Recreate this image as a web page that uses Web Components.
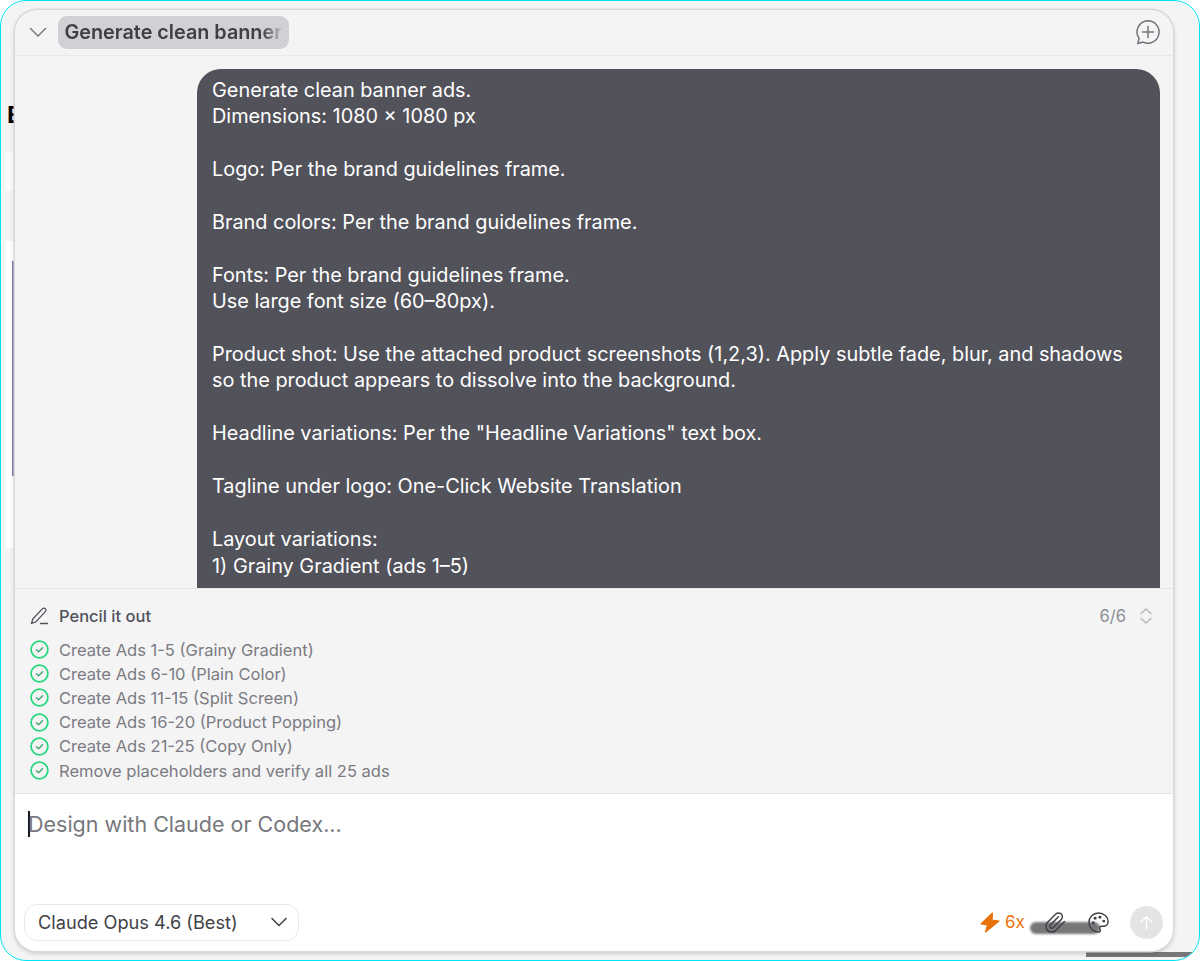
<!DOCTYPE html>
<html lang="en">
<head>
<meta charset="utf-8">
<title>Pencil chat</title>
<style>
html, body { margin: 0; padding: 0; background: #fff; }
body { font-family: Inter, "Liberation Sans", sans-serif; }
</style>
</head>
<body>
<app-frame>
	<chat-panel>
		<panel-header slot="header" title-text="Generate clean banner ads"></panel-header>
		<message-bubble slot="messages">Generate clean banner ads.
Dimensions: 1080 × 1080 px

Logo: Per the brand guidelines frame.

Brand colors: Per the brand guidelines frame.

Fonts: Per the brand guidelines frame.
Use large font size (60–80px).

Product shot: Use the attached product screenshots (1,2,3). Apply subtle fade, blur, and shadows so the product appears to dissolve into the background.

Headline variations: Per the "Headline Variations" text box.

Tagline under logo: One-Click Website Translation

Layout variations:
1) Grainy Gradient (ads 1–5)</message-bubble>
		<task-panel slot="tasks" heading="Pencil it out" count="6/6">
			<task-item>Create Ads 1-5 (Grainy Gradient)</task-item>
			<task-item>Create Ads 6-10 (Plain Color)</task-item>
			<task-item>Create Ads 11-15 (Split Screen)</task-item>
			<task-item>Create Ads 16-20 (Product Popping)</task-item>
			<task-item>Create Ads 21-25 (Copy Only)</task-item>
			<task-item>Remove placeholders and verify all 25 ads</task-item>
		</task-panel>
		<chat-composer slot="composer" placeholder="Design with Claude or Codex..." model="Claude Opus 4.6 (Best)"></chat-composer>
	</chat-panel>
</app-frame>

<script>
// marco exterior con el borde cian y los restos de la pagina de atras
class AppFrame extends HTMLElement {
	constructor() {
		super();
		this.attachShadow({ mode: 'open' });
	}
	connectedCallback() {
		this.shadowRoot.innerHTML = `
		<style>
		:host { display: block; width: 1200px; height: 961px; box-sizing: border-box; position: relative; overflow: hidden; background: #fff; }
		.frame { box-sizing: border-box; height: 961px; border: 1.5px solid #00e5f5; border-radius: 26px; background: #f4f4f5; padding: 8.5px 26px 9px 14px; position: relative; overflow: hidden; }
		.back { position: absolute; left: 4px; width: 9px; background: #fff; }
		.b1 { top: 151px; height: 38px; background: #fafafa; }
		.b2 { top: 240px; height: 307px; }
		.line { position: absolute; left: 11px; top: 260px; width: 2px; height: 215px; background: #7f80ac; }
		.glyph { position: absolute; left: 6px; top: 100px; font: 700 24px "Liberation Sans", sans-serif; color: #000; width: 7px; overflow: hidden; line-height: 28px; }
		.tail { position: absolute; right: 0; bottom: 3px; width: 113px; height: 5px; background: #77777a; }
		</style>
		<div class="frame">
			<div class="back b1"></div>
			<div class="back b2"></div>
			<div class="line"></div>
			<div class="glyph">E</div>
			<div class="tail"></div>
			<slot></slot>
		</div>
		`;
	}
}

// panel principal: cabecera, mensajes, tareas y caja de texto
class ChatPanel extends HTMLElement {
	constructor() {
		super();
		this.attachShadow({ mode: 'open' });
	}
	connectedCallback() {
		this.shadowRoot.innerHTML = `
		<style>
		:host { display: flex; flex-direction: column; height: 941px; box-sizing: border-box; border-radius: 22px; background: #f4f4f5; box-shadow: 0 0 0 1.5px #d9d9dc, 0 2px 5px rgba(0,0,0,.22); overflow: hidden; position: relative; }
		.messages { flex: 1; min-height: 0; overflow: hidden; display: flex; flex-direction: column; align-items: flex-end; padding: 12.5px 13px 0 0; }
		</style>
		<slot name="header"></slot>
		<div class="messages"><slot name="messages"></slot></div>
		<slot name="tasks"></slot>
		<slot name="composer"></slot>
		`;
	}
}

class PanelHeader extends HTMLElement {
	constructor() {
		super();
		this.attachShadow({ mode: 'open' });
	}
	connectedCallback() {
		const titulo = this.getAttribute('title-text');
		this.shadowRoot.innerHTML = `
		<style>
		:host { display: flex; flex: none; align-items: center; height: 46.5px; box-sizing: border-box; border-bottom: 1.5px solid #e8e8ea; padding: 0 12px 0 14px; }
		.chev { width: 18px; height: 18px; margin-right: 11px; flex: none; }
		.pill { width: 231px; height: 33px; box-sizing: border-box; background: #d0d0d5; border-radius: 9px; padding: 0 8px 0 6.5px; display: flex; align-items: center; overflow: hidden; }
		.pill span { font: 600 19.8px/33px Inter, "Liberation Sans", sans-serif; color: #3f3f46; white-space: nowrap; overflow: hidden; width: 100%; -webkit-mask-image: linear-gradient(to right, #000 91%, rgba(0,0,0,.15) 100%); mask-image: linear-gradient(to right, #000 91%, rgba(0,0,0,.15) 100%); }
		.add { margin-left: auto; width: 28px; height: 28px; flex: none; }
		</style>
		<svg class="chev" viewBox="0 0 18 18" fill="none" stroke="#71717a" stroke-width="1.4" stroke-linecap="round" stroke-linejoin="round"><path d="M1.500 5.500 9 13l7.500-7.500"/></svg>
		<div class="pill"><span>${titulo}</span></div>
		<svg class="add" viewBox="0 0 28 28" fill="none" stroke="#71717a" stroke-width="1.5" stroke-linecap="round" stroke-linejoin="round"><path d="M15 2.800a11.200 11.200 0 1 1-5 21.300l-5.200 1.300 1.300-5A11.200 11.200 0 0 1 15 2.800Z"/><path d="M15 8.500v11M9.500 14h11"/></svg>
		`;
	}
}

class MessageBubble extends HTMLElement {
	constructor() {
		super();
		this.attachShadow({ mode: 'open' });
	}
	connectedCallback() {
		// el slot va pegado al div: con pre-wrap cualquier espacio del template se veria
		this.shadowRoot.innerHTML = `
		<style>
		:host { display: block; flex: none; width: 963px; box-sizing: border-box; background: #52525b; border-radius: 24px; padding: 8px 15px 40px; color: #fff; font: 400 19.87px/26.45px Inter, "Liberation Sans", sans-serif; }
		.body { white-space: pre-wrap; }
		</style>
		<div class="body"><slot></slot></div>
		`;
	}
}

class TaskPanel extends HTMLElement {
	constructor() {
		super();
		this.attachShadow({ mode: 'open' });
	}
	connectedCallback() {
		this.shadowRoot.innerHTML = `
		<style>
		:host { display: block; flex: none; height: 206px; box-sizing: border-box; border-top: 1.5px solid #e6e6e8; border-bottom: 1.5px solid #e6e6e8; padding: 15px 19px 0 15px; background: #f4f4f5; }
		.head { display: flex; align-items: center; height: 24px; margin-bottom: 10px; font: 500 16.5px/24px Inter, "Liberation Sans", sans-serif; color: #52525b; }
		.head svg.pen { width: 20px; height: 20px; margin-right: 9px; flex: none; }
		.count { margin-left: auto; color: #8e8e93; font-weight: 400; font-size: 16.6px; }
		.updown { width: 16px; height: 20px; margin-left: 12px; flex: none; }
		.list { display: flex; flex-direction: column; }
		</style>
		<div class="head">
			<svg class="pen" viewBox="0 0 20 20" fill="none" stroke="#52525b" stroke-width="1.3" stroke-linecap="round" stroke-linejoin="round"><path d="M1.500 17.500 2.800 13 12.600 2.600a1.800 1.800 0 0 1 2.600 0l.3.3a1.800 1.800 0 0 1 0 2.500L5.800 15.900Z"/><path d="M10.500 17.500h7"/></svg>
			<span>${this.getAttribute('heading')}</span>
			<span class="count">${this.getAttribute('count')}</span>
			<svg class="updown" viewBox="0 0 16 20" fill="none" stroke="#b4b4b8" stroke-width="1.3" stroke-linecap="round" stroke-linejoin="round"><path d="M3 7.500 8 3l5 4.500M3 12.500 8 17l5-4.500"/></svg>
		</div>
		<div class="list"><slot></slot></div>
		`;
	}
}

class TaskItem extends HTMLElement {
	constructor() {
		super();
		this.attachShadow({ mode: 'open' });
	}
	connectedCallback() {
		this.shadowRoot.innerHTML = `
		<style>
		:host { display: flex; align-items: center; height: 24.2px; font: 400 16.55px/24px Inter, "Liberation Sans", sans-serif; color: #7b7b82; white-space: nowrap; }
		svg { width: 19px; height: 19px; margin-right: 10px; flex: none; }
		</style>
		<svg viewBox="0 0 19 19" fill="none" stroke="#22d87a" stroke-width="1.7" stroke-linecap="round" stroke-linejoin="round"><circle cx="9.500" cy="9.500" r="8.400"/><path d="m6.400 9.700 2.200 2.100 4-4.100" stroke="#3f9f70" stroke-width="1.3"/></svg>
		<slot></slot>
		`;
	}
}

class ChatComposer extends HTMLElement {
	constructor() {
		super();
		this.attachShadow({ mode: 'open' });
	}
	connectedCallback() {
		this.shadowRoot.innerHTML = `
		<style>
		:host { display: flex; flex: none; height: 157px; flex-direction: column; background: #fff; padding: 16px 10px 10px 9px; box-sizing: border-box; position: relative; }
		.field { display: flex; align-items: center; height: 28px; padding-left: 4px; font: 400 21.5px/28px Inter, "Liberation Sans", sans-serif; color: #77777c; }
		.caret { width: 2px; height: 26px; background: #18181b; margin-right: -2px; flex: none; }
		.bar { margin-top: auto; display: flex; align-items: center; position: relative; }
		.model { width: 275px; height: 37px; box-sizing: border-box; border: 1px solid #e9e9eb; border-radius: 13px; padding: 0 10px 0 13px; display: flex; align-items: center; justify-content: space-between; font: 400 18.2px/37px Inter, "Liberation Sans", sans-serif; color: #3f3f46; background: #fff; }
		.model svg { width: 18px; height: 18px; }
		.right { margin-left: auto; display: flex; align-items: center; position: relative; }
		.bolt { width: 20px; height: 21px; }
		.mult { font: 400 17px/24px Inter, "Liberation Sans", sans-serif; color: #e8710a; margin-left: 5px; width: 19px; }
		.clip { width: 23px; height: 23px; margin-left: 20px; }
		.palette { width: 23px; height: 23px; margin-left: 20px; }
		.send { width: 33px; height: 33px; border-radius: 50%; background: #e4e4e7; margin-left: 20px; display: flex; align-items: center; justify-content: center; }
		.send svg { width: 17px; height: 17px; }
		.smear { position: absolute; right: 63px; bottom: 7px; width: 70px; height: 12px; border-radius: 6px; background: #77777a; filter: blur(1px); }
		</style>
		<div class="field"><span class="caret"></span><span>${this.getAttribute('placeholder')}</span></div>
		<div class="bar">
			<div class="smear"></div>
			<div class="model"><span>${this.getAttribute('model')}</span>
				<svg viewBox="0 0 18 18" fill="none" stroke="#3f3f46" stroke-width="1.5" stroke-linecap="round" stroke-linejoin="round"><path d="M2 5.500 9 12.500l7-7"/></svg>
			</div>
			<div class="right">
				<svg class="bolt" viewBox="0 0 20 21"><path fill="#e8710a" stroke="#e8710a" stroke-width="1.2" stroke-linejoin="round" d="M12.500 1 1 12l6.500.8L5.500 20 19 9l-7-.8Z"/></svg>
				<span class="mult">6x</span>
				<svg class="clip" viewBox="0 0 24 24" fill="none" stroke="#3f3f46" stroke-width="1.5" stroke-linecap="round" stroke-linejoin="round"><path d="m21.440 11.050-9.190 9.190a6 6 0 0 1-8.490-8.490l8.570-8.570A4 4 0 1 1 18 8.840l-8.590 8.570a2 2 0 0 1-2.830-2.830l8.490-8.480"/></svg>
				<svg class="palette" viewBox="0 0 24 24" fill="none" stroke="#3f3f46" stroke-width="1.5" stroke-linecap="round" stroke-linejoin="round"><path d="M12 22a1 1 0 0 1 0-20 10 9 0 0 1 10 9 5 5 0 0 1-5 5h-2.250a1.750 1.750 0 0 0-1.400 2.800l.3.4a1.750 1.750 0 0 1-1.400 2.800z"/><g fill="#3f3f46" stroke="none"><circle cx="13.500" cy="6.500" r="1.500"/><circle cx="17.500" cy="10.500" r="1.500"/><circle cx="6.500" cy="12.500" r="1.500"/><circle cx="8.500" cy="7.500" r="1.500"/></g></svg>
				<div class="send"><svg viewBox="0 0 17 17" fill="none" stroke="#fff" stroke-width="1.4" stroke-linecap="round" stroke-linejoin="round"><path d="M8.500 15V2.500M3 8l5.500-5.500L14 8"/></svg></div>
			</div>
		</div>
		`;
	}
}

customElements.define('app-frame', AppFrame);
customElements.define('chat-panel', ChatPanel);
customElements.define('panel-header', PanelHeader);
customElements.define('message-bubble', MessageBubble);
customElements.define('task-panel', TaskPanel);
customElements.define('task-item', TaskItem);
customElements.define('chat-composer', ChatComposer);
</script>
</body>
</html>
